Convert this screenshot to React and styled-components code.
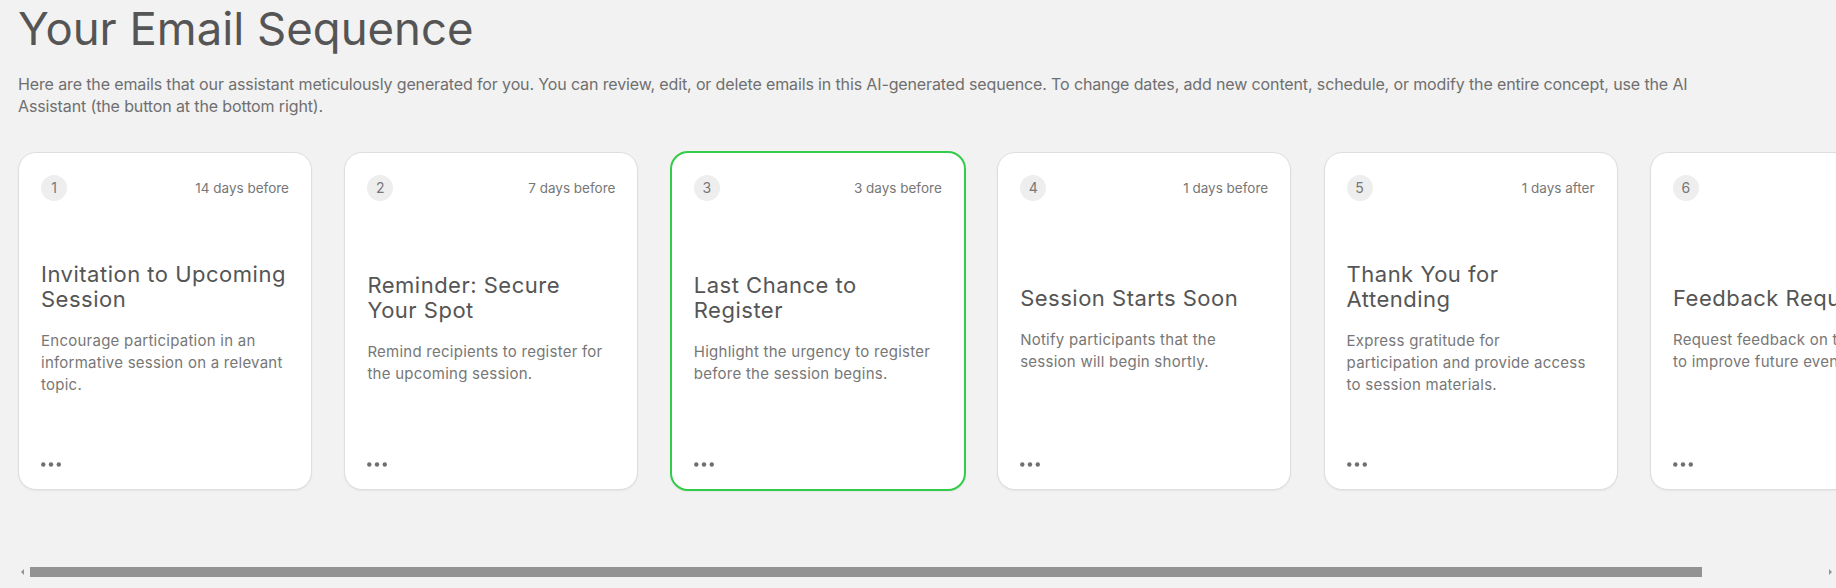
import React from "react";
import styled, { createGlobalStyle } from "styled-components";

const emails = [
  {
    id: 1,
    when: "14 days before",
    title: "Invitation to Upcoming Session",
    text: "Encourage participation in an informative session on a relevant topic.",
  },
  {
    id: 2,
    when: "7 days before",
    title: "Reminder: Secure Your Spot",
    text: "Remind recipients to register for the upcoming session.",
  },
  {
    id: 3,
    when: "3 days before",
    title: "Last Chance to Register",
    text: "Highlight the urgency to register before the session begins.",
    selected: true,
  },
  {
    id: 4,
    when: "1 days before",
    title: "Session Starts Soon",
    text: "Notify participants that the session will begin shortly.",
  },
  {
    id: 5,
    when: "1 days after",
    title: "Thank You for Attending",
    text: "Express gratitude for participation and provide access to session materials.",
  },
  {
    id: 6,
    when: "2 days after",
    title: "Feedback Request",
    text: "Request feedback on the session to improve future events.",
  },
];

function Dots() {
  return (
    <svg width="21" height="5" viewBox="0 0 21 5">
      <circle cx="2.3" cy="2.5" r="2.2" fill="#6f6f6f" />
      <circle cx="10" cy="2.5" r="2.2" fill="#6f6f6f" />
      <circle cx="17.8" cy="2.5" r="2.2" fill="#6f6f6f" />
    </svg>
  );
}

function App() {
  return (
    <Page>
      <GlobalStyle />
      <Title>Your Email Sequence</Title>
      <Intro>
        Here are the emails that our assistant meticulously generated for you. You can review,
        edit, or delete emails in this AI-generated sequence. To change dates, add new content,
        schedule, or modify the entire concept, use the AI Assistant (the button at the bottom
        right).
      </Intro>
      <Track>
        {emails.map((email) => (
          <Card key={email.id} $selected={email.selected}>
            <CardHead>
              <Step>{email.id}</Step>
              <When>{email.when}</When>
            </CardHead>
            <CardBody>
              <CardTitle>{email.title}</CardTitle>
              <CardText>{email.text}</CardText>
            </CardBody>
            <CardFoot>
              <Dots />
            </CardFoot>
          </Card>
        ))}
      </Track>
      <ScrollBar>
        <Arrow $dir="left" />
        <Thumb />
        <Arrow $dir="right" />
      </ScrollBar>
    </Page>
  );
}

export default App;

const GlobalStyle = createGlobalStyle`
  html, body {
    margin: 0;
    background: #f2f2f2;
    overflow: hidden;
  }
  body {
    font-family: Inter, "Noto Sans", sans-serif;
  }
`;

const Page = styled.div`
  padding-left: 18px;
  height: 588px;
  box-sizing: border-box;
`;

const Title = styled.h1`
  margin: 2px 0 0;
  font-size: 45.5px;
  line-height: 54px;
  font-weight: 400;
  color: #555555;
`;

const Intro = styled.p`
  margin: 16.5px 0 0;
  max-width: 1720px;
  font-size: 16px;
  line-height: 22px;
  letter-spacing: -0.13px;
  color: #6f6f6f;
`;

const Track = styled.div`
  display: flex;
  gap: 32.4px;
  margin: 34px 0 0 -1px;
  padding: 1px 20px 0 1px;
  height: 340px;
  overflow-x: auto;
  overflow-y: hidden;
  scrollbar-width: none;
`;

const Card = styled.div`
  flex: 0 0 auto;
  box-sizing: border-box;
  width: ${(p) => (p.$selected ? "296px" : "294px")};
  height: ${(p) => (p.$selected ? "340px" : "338px")};
  margin: ${(p) => (p.$selected ? "-1px" : "0")};
  padding: 22px;
  display: flex;
  flex-direction: column;
  background: #ffffff;
  border: ${(p) => (p.$selected ? "2px solid #33cc4a" : "1px solid #dedede")};
  border-radius: 18px;
  box-shadow: 0 1px 2px rgba(0, 0, 0, 0.06);
`;

const CardHead = styled.div`
  display: flex;
  align-items: center;
  justify-content: space-between;
  height: 26px;
`;

const Step = styled.span`
  display: flex;
  align-items: center;
  justify-content: center;
  width: 26px;
  height: 26px;
  border-radius: 50%;
  background: #eeeeee;
  color: #777777;
  font-size: 14px;
`;

const When = styled.span`
  font-size: 13.5px;
  color: #777777;
  white-space: nowrap;
`;

const CardBody = styled.div`
  flex: 1;
  display: flex;
  flex-direction: column;
  justify-content: center;
  gap: 18px;
  padding-right: 2px;
`;

const CardTitle = styled.h2`
  margin: 0;
  font-size: 22px;
  line-height: 25px;
  letter-spacing: 0.5px;
  font-weight: 400;
  color: #555555;
`;

const CardText = styled.p`
  margin: 0;
  font-size: 15px;
  line-height: 22px;
  letter-spacing: 0.25px;
  color: #777777;
`;

const CardFoot = styled.div`
  height: 9px;
  display: flex;
  align-items: flex-end;
`;

const ScrollBar = styled.div`
  display: flex;
  align-items: center;
  height: 11px;
  margin: 75px 0 0 -1px;
`;

const Arrow = styled.span`
  flex: 0 0 11px;
  height: 11px;
  position: relative;
  margin-left: ${(p) => (p.$dir === "right" ? "auto" : "0")};
  &::before {
    content: "";
    position: absolute;
    top: 2px;
    left: 4px;
    border-top: 3.5px solid transparent;
    border-bottom: 3.5px solid transparent;
    border-${(p) => (p.$dir === "left" ? "right" : "left")}: 3.5px solid #939393;
  }
`;

const Thumb = styled.span`
  flex: 0 0 1672px;
  height: 10px;
  margin-left: 2px;
  background: #939393;
`;
